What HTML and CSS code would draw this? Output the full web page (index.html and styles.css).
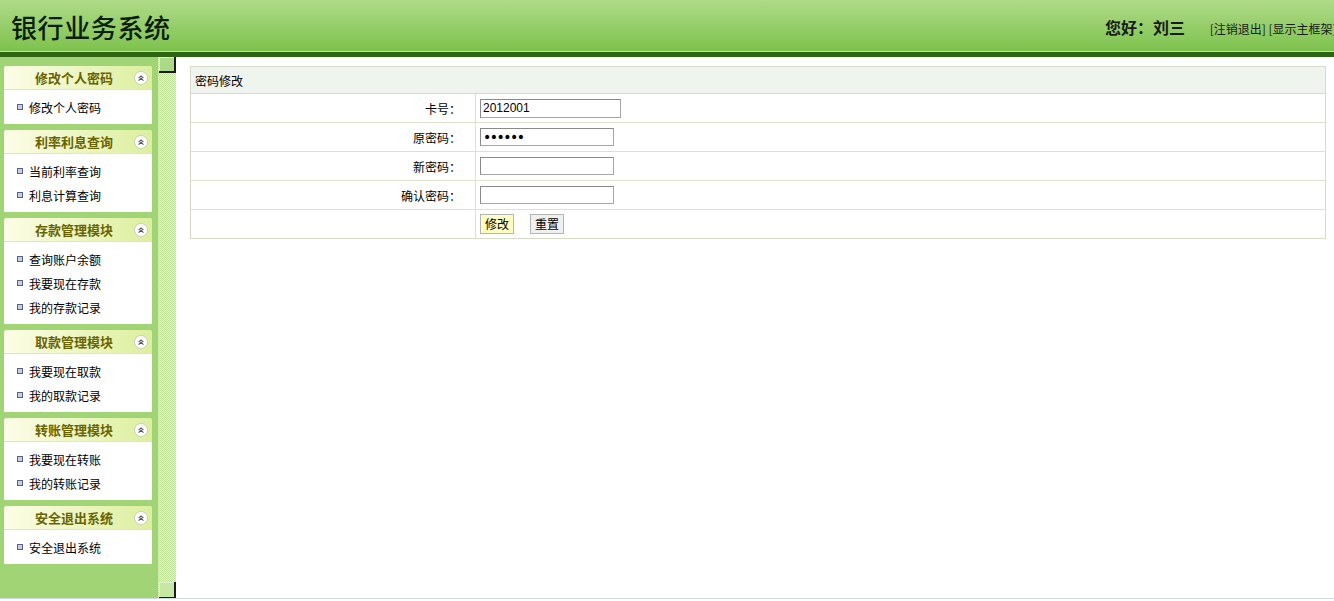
FILE: index.html
```html
<!DOCTYPE HTML>
<html lang="zh-CN">
<head>
    <meta charset="utf-8">
    <title>银行业务系统</title>
    <link rel="stylesheet" href="styles.css">
</head>
<body>
    <div class="header">
        <h1 class="logo">银行业务系统</h1>
        <div class="user-bar">
            <span class="hello">您好：刘三</span>
            <a href="#" class="top-link">[注销退出]</a> <a href="#" class="top-link">[显示主框架]</a>
        </div>
    </div>

    <div class="main">
        <div class="sidebar">
            <div class="panel">
                <div class="panel-title"><span>修改个人密码</span><i class="fold"><svg width="14" height="14" viewBox="0 0 14 14"><circle cx="7" cy="7" r="6.5" fill="#fff" stroke="#c8ccc0"/><path d="M4.6 7.2 7 4.9 9.4 7.2M4.6 9.6 7 7.3 9.4 9.6" fill="none" stroke="#555" stroke-width="1.1"/></svg></i></div>
                <ul class="panel-list">
                    <li>修改个人密码</li>
                </ul>
            </div>
            <div class="panel">
                <div class="panel-title"><span>利率利息查询</span><i class="fold"><svg width="14" height="14" viewBox="0 0 14 14"><circle cx="7" cy="7" r="6.5" fill="#fff" stroke="#c8ccc0"/><path d="M4.6 7.2 7 4.9 9.4 7.2M4.6 9.6 7 7.3 9.4 9.6" fill="none" stroke="#555" stroke-width="1.1"/></svg></i></div>
                <ul class="panel-list">
                    <li>当前利率查询</li>
                    <li>利息计算查询</li>
                </ul>
            </div>
            <div class="panel">
                <div class="panel-title"><span>存款管理模块</span><i class="fold"><svg width="14" height="14" viewBox="0 0 14 14"><circle cx="7" cy="7" r="6.5" fill="#fff" stroke="#c8ccc0"/><path d="M4.6 7.2 7 4.9 9.4 7.2M4.6 9.6 7 7.3 9.4 9.6" fill="none" stroke="#555" stroke-width="1.1"/></svg></i></div>
                <ul class="panel-list">
                    <li>查询账户余额</li>
                    <li>我要现在存款</li>
                    <li>我的存款记录</li>
                </ul>
            </div>
            <div class="panel">
                <div class="panel-title"><span>取款管理模块</span><i class="fold"><svg width="14" height="14" viewBox="0 0 14 14"><circle cx="7" cy="7" r="6.5" fill="#fff" stroke="#c8ccc0"/><path d="M4.6 7.2 7 4.9 9.4 7.2M4.6 9.6 7 7.3 9.4 9.6" fill="none" stroke="#555" stroke-width="1.1"/></svg></i></div>
                <ul class="panel-list">
                    <li>我要现在取款</li>
                    <li>我的取款记录</li>
                </ul>
            </div>
            <div class="panel">
                <div class="panel-title"><span>转账管理模块</span><i class="fold"><svg width="14" height="14" viewBox="0 0 14 14"><circle cx="7" cy="7" r="6.5" fill="#fff" stroke="#c8ccc0"/><path d="M4.6 7.2 7 4.9 9.4 7.2M4.6 9.6 7 7.3 9.4 9.6" fill="none" stroke="#555" stroke-width="1.1"/></svg></i></div>
                <ul class="panel-list">
                    <li>我要现在转账</li>
                    <li>我的转账记录</li>
                </ul>
            </div>
            <div class="panel">
                <div class="panel-title"><span>安全退出系统</span><i class="fold"><svg width="14" height="14" viewBox="0 0 14 14"><circle cx="7" cy="7" r="6.5" fill="#fff" stroke="#c8ccc0"/><path d="M4.6 7.2 7 4.9 9.4 7.2M4.6 9.6 7 7.3 9.4 9.6" fill="none" stroke="#555" stroke-width="1.1"/></svg></i></div>
                <ul class="panel-list">
                    <li>安全退出系统</li>
                </ul>
            </div>
        </div>

        <div class="splitter">
            <div class="split-btn"></div>
            <div class="split-btn bottom"></div>
        </div>

        <div class="content">
            <table class="form-table">
                <tr>
                    <th colspan="2">密码修改</th>
                </tr>
                <tr>
                    <td class="label">卡号：</td>
                    <td class="field"><input type="text" class="input wide" value="2012001"></td>
                </tr>
                <tr>
                    <td class="label">原密码：</td>
                    <td class="field"><input type="password" class="input" value="123456"></td>
                </tr>
                <tr>
                    <td class="label">新密码：</td>
                    <td class="field"><input type="password" class="input"></td>
                </tr>
                <tr>
                    <td class="label">确认密码：</td>
                    <td class="field"><input type="password" class="input"></td>
                </tr>
                <tr>
                    <td class="label"></td>
                    <td class="field"><button class="btn btn-submit">修改</button><button class="btn">重置</button></td>
                </tr>
            </table>
        </div>
    </div>
</body>
</html>
```

FILE: styles.css
```css
html, body {
    margin: 0;
    padding: 0;
    height: 601px;
    overflow: hidden;
}
body {
    font-family: "Noto Sans CJK SC", "Liberation Sans", sans-serif;
    font-size: 12px;
    color: #000;
    background-color: #fff;
}
.header {
    display: flex;
    align-items: center;
    height: 52px;
    background: linear-gradient(#b0da88, #7cc24c);
    box-shadow: inset 0 -1px #b8e890;
    border-bottom: 5px solid #2d6512;
    overflow: hidden;
}
.logo {
    flex: 1;
    margin: 0 0 0 11px;
    font-size: 26px;
    font-weight: 500;
    color: #0c1e08;
    letter-spacing: 0.6px;
}
.user-bar {
    width: 229px;
    white-space: nowrap;
    overflow: hidden;
    padding-top: 1px;
}
.hello {
    font-size: 16px;
    font-weight: bold;
    color: #1a1a1a;
    margin-right: 22px;
}
.top-link {
    color: #1a1a1a;
    text-decoration: none;
    font-size: 12px;
}
.main {
    display: flex;
    height: 541px;
    border-bottom: 1px solid #cfdce4;
}
.sidebar {
    width: 148px;
    padding: 9px 6px 0 4px;
    background-color: #a0d474;
}
.panel {
    background-color: #fff;
    margin-bottom: 6px;
    border-radius: 3px 3px 0 0;
}
.panel-title {
    display: flex;
    align-items: center;
    height: 23px;
    padding: 0 4px 0 14px;
    border-radius: 3px 3px 0 0;
    background: linear-gradient(to right, #fdfde8, #dcef9e);
    border-bottom: 1px solid #dfe6c4;
}
.panel-title span {
    flex: 1;
    text-align: center;
    font-size: 13px;
    font-weight: bold;
    line-height: 22px;
    color: #6a6400;
}
.fold {
    display: flex;
    width: 14px;
    height: 14px;
    margin-left: 4px;
}
.panel-list {
    list-style: none;
    margin: 0;
    padding: 5px 0 5px 13px;
}
.panel-list li {
    display: flex;
    align-items: center;
    height: 24px;
    font-size: 12px;
}
.panel-list li::before {
    content: "";
    width: 4px;
    height: 4px;
    margin-right: 6px;
    border: 1px solid #56628e;
    background-color: #c6cde4;
}
.splitter {
    display: flex;
    flex-direction: column;
    justify-content: space-between;
    width: 18px;
    background: repeating-conic-gradient(#c2e39a 0 25%, #e4f2cc 0 50%) 0 0 / 2px 2px;
}
.split-btn {
    height: 14px;
    margin-left: 1px;
    background-color: #acd987;
    box-shadow: inset 1px 1px #dcf2c6;
    border-right: 2px solid #1b1b1b;
    border-bottom: 2px solid #1b1b1b;
}
.split-btn.bottom {
    height: 15px;
    background-color: #c6e8a4;
    border-bottom-width: 1px;
}
.content {
    flex: 1;
    padding: 9px 8px 0 14px;
}
.form-table {
    width: 100%;
    border-collapse: collapse;
    border: 1px solid #d6dcc6;
}
.form-table th {
    height: 26px;
    padding: 0 0 0 4px;
    text-align: left;
    font-weight: normal;
    font-size: 12px;
    background-color: #f0f4ee;
    border-bottom: 1px solid #d6dcc6;
}
.form-table td {
    height: 28px;
    padding: 0;
    border-top: 1px solid #dde2cc;
}
.form-table .label {
    width: 270px;
    padding-right: 14px;
    text-align: right;
    border-right: 1px solid #dde2cc;
}
.form-table .field {
    padding-left: 4px;
}
.input {
    display: block;
    box-sizing: border-box;
    width: 134px;
    height: 18px;
    margin: 0;
    padding: 0 2px;
    font-family: "Liberation Sans", sans-serif;
    font-size: 12px;
    border: 1px solid #a6a6a6;
    border-top-color: #8a8a8a;
    border-left-color: #8a8a8a;
}
.input[type="password"] {
    font-family: "DejaVu Sans", sans-serif;
    font-size: 14px;
    letter-spacing: -1.5px;
}
.input.wide {
    width: 141px;
    height: 19px;
}
.btn {
    box-sizing: border-box;
    height: 20px;
    padding: 0 4px;
    margin: 0 16px 0 0;
    font-family: "Noto Sans CJK SC", sans-serif;
    font-size: 12px;
    line-height: 18px;
    background-color: #f0f0f0;
    border: 1px solid #b4b4b4;
    cursor: pointer;
}
.btn-submit {
    background-color: #ffffc0;
}
```
